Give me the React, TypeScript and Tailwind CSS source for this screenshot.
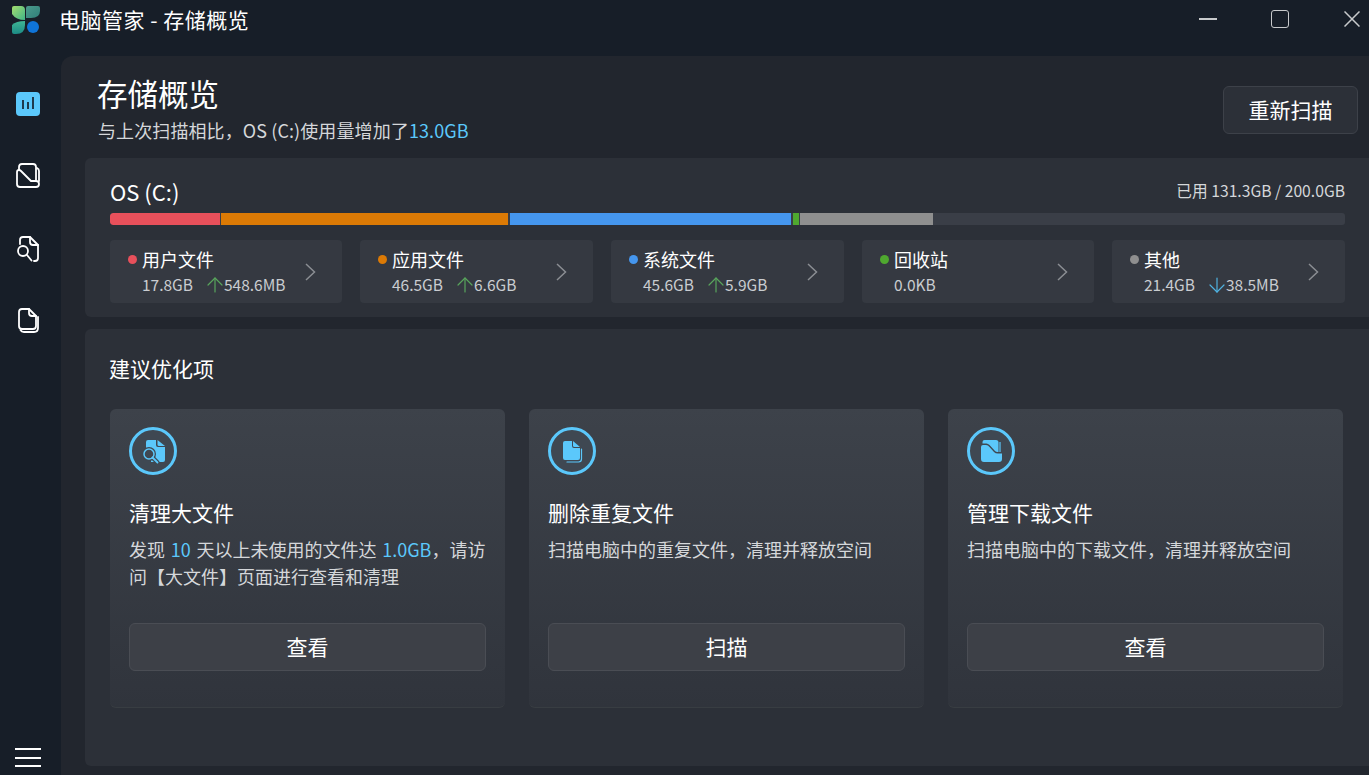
import type { ReactNode } from 'react'
import { ArrowUp, ArrowDown } from 'lucide-react'

const FONT = '"Noto Sans CJK SC", "Noto Sans", sans-serif'

const segments = [
  { w: 'w-[110px] rounded-l-[3px]', color: 'bg-[#e8505b]' },
  { w: 'w-[287px]', color: 'bg-[#dc7a05]' },
  { w: 'w-[281px] ml-[1px]', color: 'bg-[#4596ee]' },
  { w: 'w-[6px] ml-[1px]', color: 'bg-[#4fa82f]' },
  { w: 'w-[133px]', color: 'bg-[#8f8f8f]' },
]

const stats = [
  { name: '用户文件', size: '17.8GB', delta: '548.6MB', dir: 'up', dot: 'bg-[#e8505b]', w: 'w-[232px]' },
  { name: '应用文件', size: '46.5GB', delta: '6.6GB', dir: 'up', dot: 'bg-[#dc7a05]', w: 'w-[233px]' },
  { name: '系统文件', size: '45.6GB', delta: '5.9GB', dir: 'up', dot: 'bg-[#4596ee]', w: 'w-[233px]' },
  { name: '回收站', size: '0.0KB', delta: '', dir: '', dot: 'bg-[#4fa82f]', w: 'w-[232px]' },
  { name: '其他', size: '21.4GB', delta: '38.5MB', dir: 'down', dot: 'bg-[#8f8f8f]', w: 'w-[233px]' },
]

function Logo() {
  return (
    <svg width="30" height="30" viewBox="0 0 30 30">
      <defs>
        <linearGradient id="lg1" x1="0" y1="0" x2="1" y2="1">
          <stop offset="0" stopColor="#a5dd6e" />
          <stop offset="1" stopColor="#3fb488" />
        </linearGradient>
        <linearGradient id="lg2" x1="0" y1="0" x2="1" y2="1">
          <stop offset="0" stopColor="#4c9a8c" />
          <stop offset="1" stopColor="#2f7f79" />
        </linearGradient>
        <linearGradient id="lg3" x1="0" y1="0" x2="0" y2="1">
          <stop offset="0" stopColor="#3fb594" />
          <stop offset="1" stopColor="#1c8b85" />
        </linearGradient>
      </defs>
      <path d="M1 3Q1 1 3 1H10Q14 1 14 5V15Q5 15 1 9Z" fill="url(#lg1)" />
      <path d="M15 3Q15 1 17 1H27Q29 1 29 3V6Q29 13 20 13H15Z" fill="url(#lg2)" />
      <path d="M1 20Q5 16 14 16V20Q14 29 5 29H3Q1 29 1 27Z" fill="url(#lg3)" />
      <circle cx="22" cy="22" r="6" fill="#0f74d8" />
    </svg>
  )
}

function Folder() {
  return (
    <svg width="24" height="26" viewBox="0 0 24 26" fill="none" stroke="white" strokeWidth="1.800" strokeLinejoin="round" strokeLinecap="round">
      <path d="M3 7V4Q3 1 6 1H17Q20 1 20 4V17" />
      <path d="M1 9V21Q1 24 4 24H20Q23 24 23 21Q23 18 20 18H15L5 8Q4 7 3 7Q1 7 1 9Z" />
      <path d="M21 5Q23 6 23 8V18" />
    </svg>
  )
}

function DocSearch() {
  return (
    <svg width="24" height="26" viewBox="0 0 24 26" fill="none" stroke="white" strokeWidth="1.800" strokeLinejoin="round" strokeLinecap="round">
      <path d="M4 8V4Q4 1 7 1H14L22 9V22Q22 25 19 25H18" />
      <path d="M14 1V6Q14 9 17 9H22" />
      <circle cx="7" cy="15" r="5" />
      <path d="M11 19L15.500 24.500" />
    </svg>
  )
}

function DocCopy() {
  return (
    <svg width="24" height="26" viewBox="0 0 24 26" fill="none" stroke="white" strokeWidth="1.800" strokeLinejoin="round" strokeLinecap="round">
      <path d="M3 4Q3 1 6 1H13L20 8V18Q20 21 17 21H6Q3 21 3 18Z" />
      <path d="M13 1V5Q13 8 16 8H20" />
      <path d="M22 9V20Q22 24 18 24H8Q5.500 24 4.500 22" />
    </svg>
  )
}

function Chevron() {
  return (
    <svg width="11" height="18" viewBox="0 0 11 18" fill="none" stroke="#8b8e93" strokeWidth="1.500">
      <path d="M1 1L9.500 9L1 17" />
    </svg>
  )
}

function RingIcon({ children }: { children: ReactNode }) {
  return (
    <div className="w-[48px] h-[48px] rounded-full border-[3px] border-[#5bc8fb] bg-[#3f4852] flex items-center justify-center">
      {children}
    </div>
  )
}

const ringSearch = (
  <svg width="28" height="28" viewBox="0 0 28 28">
    <path d="M7 5Q7 3 9 3H17V8Q17 10 19 10H26V23Q26 25 24 25H12V14H7Z" fill="#5bc8fb" />
    <path d="M18.500 3L26 9H20Q18.500 9 18.500 7.500Z" fill="#5bc8fb" />
    <circle cx="10" cy="17" r="7" fill="#3f4852" />
    <path d="M13.500 20.500L19 26" stroke="#3f4852" strokeWidth="4.500" />
    <circle cx="10" cy="17" r="5" fill="#3f4852" stroke="#5bc8fb" strokeWidth="1.500" />
    <path d="M13.500 20.500L18.500 25.500" stroke="#5bc8fb" strokeWidth="1.800" strokeLinecap="round" />
  </svg>
)

const ringCopy = (
  <svg width="28" height="28" viewBox="0 0 28 28">
    <path d="M5 6Q5 4 7 4H14V9Q14 11 16 11H22V21Q22 23 20 23H7Q5 23 5 21Z" fill="#5bc8fb" />
    <path d="M15 4L22 10H16.500Q15 10 15 8.500Z" fill="#5bc8fb" />
    <path d="M23.500 12V22Q23.500 25 20.500 25H9" fill="none" stroke="#5bc8fb" strokeWidth="1.200" strokeLinecap="round" />
  </svg>
)

const ringFolder = (
  <svg width="30" height="28" viewBox="0 0 30 28">
    <path d="M6.500 6.500V5Q6.500 3 8.500 3H20Q22.500 3 22.500 5.500V15H21.500Q20 15 19 14L13.500 8Q12 6.500 10.500 6.500Z" fill="#5bc8fb" />
    <path d="M24 5V15" stroke="#5bc8fb" strokeWidth="1.200" fill="none" />
    <path d="M5 10Q5 8 7 8H10Q12 8 13.500 10L18 15Q19.500 16.500 22 16.500H26V22Q26 25 23 25H8Q5 25 5 22Z" fill="#5bc8fb" />
  </svg>
)

function BigCard({ icon, title, desc, action }: { icon: ReactNode; title: string; desc: ReactNode; action: string }) {
  return (
    <div className="w-[395px] h-[299px] rounded-md bg-gradient-to-b from-[#3d424a] to-[#30343c] border-b border-[#383d42] pt-[18px] px-[19px] flex flex-col">
      <RingIcon>{icon}</RingIcon>
      <h3 className="mt-[23px] text-[21px] leading-[28px] text-white">{title}</h3>
      <p className="mt-[10px] h-[54px] text-[18px] leading-[27px] text-[#d5d7da] [word-spacing:1.700px]">{desc}</p>
      <button className="mt-[33px] w-[357px] h-[48px] shrink-0 rounded-md bg-[#3d4047] border border-[#4a4d54] text-[21px] text-white">{action}</button>
    </div>
  )
}

export default function App() {
  return (
    <div className="w-[1369px] h-[775px] overflow-hidden bg-[#171e28] text-white" style={{ fontFamily: FONT }}>
      {/* Title bar */}
      <div className="h-[56px] flex items-start">
        <div className="ml-[11px] mt-[5px]"><Logo /></div>
        <span className="ml-[18px] mt-[4px] text-[21px] leading-[30px] tracking-[0.500px]">电脑管家 - 存储概览</span>
        <div className="ml-auto flex items-center mt-[8px] h-[22px]">
          <div className="w-[18px] h-[1.500px] bg-[#c8cacc]" />
          <div className="ml-[54px] w-[18px] h-[18px] rounded-[3px] border-[1.500px] border-[#c8cacc]" />
          <svg className="ml-[55px] mr-[9px]" width="16" height="16" viewBox="0 0 16 16" stroke="#c8cacc" strokeWidth="1.500">
            <path d="M0.500 0.500L15.500 15.500M15.500 0.500L0.500 15.500" />
          </svg>
        </div>
      </div>

      <div className="flex h-[719px]">
        {/* Sidebar */}
        <aside className="w-[61px] pr-[5px] flex flex-col items-center">
          <div className="mt-[36px] w-[24px] h-[24px] rounded-[4px] bg-[#5bc8fb] flex items-end justify-center gap-[3px] pb-[7px]">
            <span className="w-[2px] h-[9px] bg-[#1f3a4c]" />
            <span className="w-[2px] h-[7px] bg-[#1f3a4c]" />
            <span className="w-[2px] h-[12px] bg-[#1f3a4c]" />
          </div>
          <div className="mt-[47px] h-[26px]"><Folder /></div>
          <div className="mt-[47px] h-[26px]"><DocSearch /></div>
          <div className="mt-[46px] h-[26px]"><DocCopy /></div>
          <div className="mt-auto mb-[8px] w-[26px] flex flex-col gap-[6.500px]">
            <span className="h-[2px] bg-white" />
            <span className="h-[2px] bg-white" />
            <span className="h-[2px] bg-white" />
          </div>
        </aside>

        {/* Main */}
        <main className="flex-1 rounded-tl-xl bg-[#22262e] pl-[24px] flex flex-col">
          <div className="h-[102px] flex justify-between items-start">
            <div className="pl-[12px]">
              <h1 className="mt-[17px] text-[30.500px] leading-[40px] font-normal">存储概览</h1>
              <p className="mt-[4px] ml-[1px] text-[18px] leading-[26px] text-[#d5d7da] tracking-[0.100px]">
                与上次扫描相比，OS (C:)使用量增加了<span className="text-[#5bc8fb]">13.0GB</span>
              </p>
            </div>
            <button className="mt-[30px] mr-[11px] w-[135px] h-[48px] rounded-md border border-[#3d4149] bg-[#2c3038] text-[21px]">重新扫描</button>
          </div>

          {/* Disk panel */}
          <section className="h-[159px] rounded-l-md bg-[#2c3038] pl-[25px] pr-[24px] flex flex-col">
            <div className="mt-[19px] h-[28px] flex justify-between items-center">
              <span className="text-[22px] leading-[28px]">OS (C:)</span>
              <span className="text-[15.700px] text-[#d5d7da]">已用 131.3GB / 200.0GB</span>
            </div>
            <div className="mt-[8px] h-[12px] rounded-[3px] bg-[#3a3e47] flex gap-[1px] overflow-hidden">
              {segments.map((s, i) => (
                <div key={i} className={`h-full ${s.w} ${s.color}`} />
              ))}
            </div>
            <div className="mt-[15px] flex gap-[18px]">
              {stats.map((s) => (
                <div key={s.name} className={`${s.w} h-[63px] rounded-[4px] bg-[#353941] pl-[18px] pr-[26px] flex items-center justify-between`}>
                  <div>
                    <div className="flex items-center h-[26px] mt-[1px]">
                      <span className={`w-[9px] h-[9px] rounded-full ${s.dot}`} />
                      <span className="ml-[5px] text-[18px] leading-[26px]">{s.name}</span>
                    </div>
                    <div className="flex items-center h-[26px] pl-[14px] text-[15.500px] text-[#c9ccd0]">
                      <span className="w-[61px] whitespace-nowrap">{s.size}</span>
                      {s.dir === 'up' && <ArrowUp className="w-[24px] h-[24px] -mr-[3px] text-[#58a55c]" strokeWidth={1.200} />}
                      {s.dir === 'down' && <ArrowDown className="w-[24px] h-[24px] -mr-[3px] text-[#4fb2e0]" strokeWidth={1.200} />}
                      <span>{s.delta}</span>
                    </div>
                  </div>
                  <Chevron />
                </div>
              ))}
            </div>
          </section>

          {/* Suggestions panel */}
          <section className="mt-[12px] h-[437px] rounded-l-md bg-[#2c3038] pl-[25px]">
            <h2 className="pt-[24px] -ml-[1px] text-[21px] leading-[30px]">建议优化项</h2>
            <div className="mt-[26px] flex gap-[24px]">
              <BigCard
                icon={ringSearch}
                title="清理大文件"
                desc={<>发现 <span className="text-[#5bc8fb]">10</span> 天以上未使用的文件达 <span className="text-[#5bc8fb]">1.0GB</span>，请访问【大文件】页面进行查看和清理</>}
                action="查看"
              />
              <BigCard icon={ringCopy} title="删除重复文件" desc="扫描电脑中的重复文件，清理并释放空间" action="扫描" />
              <BigCard icon={ringFolder} title="管理下载文件" desc="扫描电脑中的下载文件，清理并释放空间" action="查看" />
            </div>
          </section>
        </main>
      </div>
    </div>
  )
}
